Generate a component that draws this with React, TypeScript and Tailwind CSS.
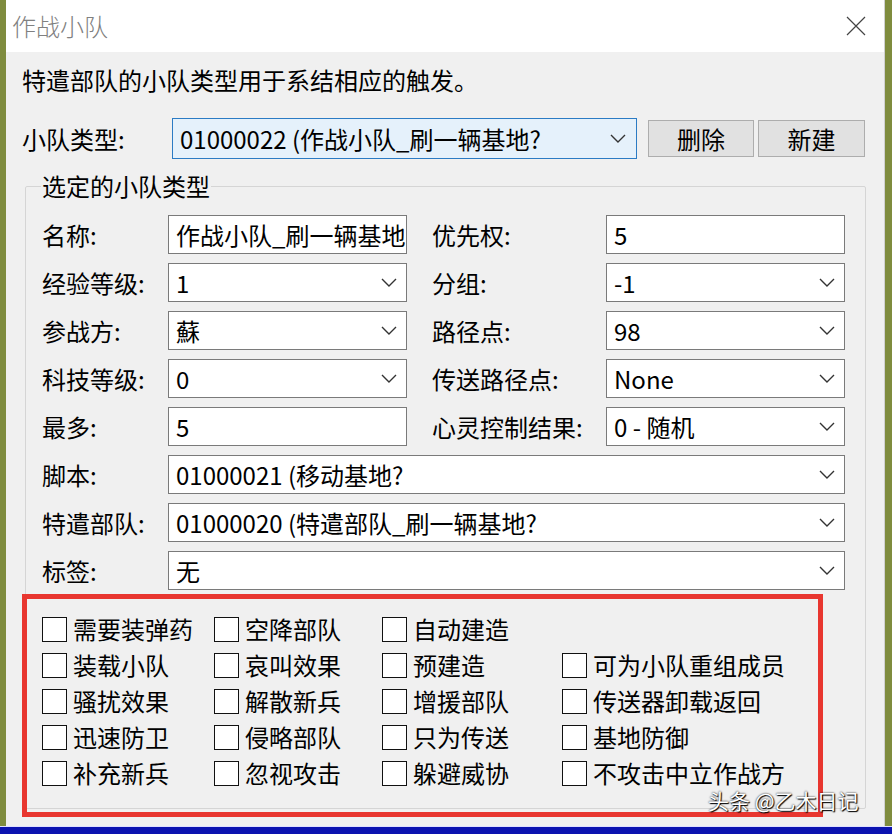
import React from "react";

function Chevron() {
  return (
    <svg width="16" height="9" viewBox="0 0 16 9" className="shrink-0">
      <path d="M1 1l7 7 7-7" stroke="#333" fill="none" strokeWidth="1.4" />
    </svg>
  );
}

function Field({ w, text, combo }: { w: string; text: string; combo?: boolean }) {
  return (
    <div
      className={`${w} h-[39px] bg-white border border-[#7a7a7a] flex items-center pl-[7px] ${
        combo ? "pr-[9px] justify-between" : "pr-0"
      }`}
    >
      <span className="whitespace-nowrap leading-[32px]">{text}</span>
      {combo && <Chevron />}
    </div>
  );
}

function Row({
  l1,
  v1,
  c1,
  l2,
  v2,
  c2,
}: {
  l1: string;
  v1: string;
  c1?: boolean;
  l2: string;
  v2: string;
  c2?: boolean;
}) {
  return (
    <div className="flex items-center h-[39px]">
      <div className="w-[126px] whitespace-nowrap">{l1}</div>
      <Field w="w-[239px]" text={v1} combo={c1} />
      <div className="w-[25px]" />
      <div className="w-[174px] whitespace-nowrap">{l2}</div>
      <Field w="w-[239px]" text={v2} combo={c2} />
    </div>
  );
}

function FullRow({ l, v }: { l: string; v: string }) {
  return (
    <div className="flex items-center h-[39px]">
      <div className="w-[126px] whitespace-nowrap">{l}</div>
      <Field w="w-[677px]" text={v} combo />
    </div>
  );
}

function Check({ label, w }: { label: string; w: string }) {
  return (
    <div className={`${w} flex items-center gap-[6px]`}>
      <div className="w-[25px] h-[25px] border-[1.5px] border-[#111] bg-white shrink-0" />
      <span className="whitespace-nowrap leading-[30px]">{label}</span>
    </div>
  );
}

const checkRows: (string | null)[][] = [
  ["需要装弹药", "空降部队", "自动建造", null],
  ["装载小队", "哀叫效果", "预建造", "可为小队重组成员"],
  ["骚扰效果", "解散新兵", "增援部队", "传送器卸载返回"],
  ["迅速防卫", "侵略部队", "只为传送", "基地防御"],
  ["补充新兵", "忽视攻击", "躲避威协", "不攻击中立作战方"],
];
const colW = ["w-[172px]", "w-[168px]", "w-[180px]", "w-[240px]"];

export default function App() {
  return (
    <div className="relative w-[892px] h-[834px] bg-[#7f8c3e] overflow-hidden font-['Noto_Sans_CJK_SC','Noto_Sans',sans-serif] text-[24px] text-black leading-[30px]">
      <div className="ml-[6px] w-[879px] h-[826px] flex flex-col bg-[#f0f0f0] border-r border-[#d0d0d0]">
        {/* title bar */}
        <div className="h-[52px] bg-white flex items-center justify-between pl-[6px] pr-[18px] shrink-0">
          <span className="text-[#808080] font-light">作战小队</span>
          <svg width="20" height="20" viewBox="0 0 20 20">
            <path d="M1 1l18 18M19 1L1 19" stroke="#444" strokeWidth="1.2" />
          </svg>
        </div>
        {/* body */}
        <div className="flex flex-col">
          <div className="pt-[13px] pl-[16px] leading-[30px] h-[43px]">特遣部队的小队类型用于系结相应的触发。</div>
          <div className="mt-[23px] flex items-center h-[41px] pl-[16px]">
            <div className="w-[150px] whitespace-nowrap">小队类型:</div>
            <div className="w-[465px] h-[41px] bg-[#e5f1fb] border border-[#2b7bc4] flex items-center justify-between pl-[7px] pr-[10px]">
              <span className="whitespace-nowrap leading-[32px]">01000022 (作战小队_刷一辆基地?</span>
              <Chevron />
            </div>
            <div className="w-[11px]" />
            <div className="w-[106px] h-[37px] bg-[#e1e1e1] border border-[#adadad] flex items-center justify-center">删除</div>
            <div className="w-[4px]" />
            <div className="w-[107px] h-[37px] bg-[#e1e1e1] border border-[#adadad] flex items-center justify-center">新建</div>
          </div>
          <fieldset className="mt-[12px] ml-[19px] w-[841px] h-[638px] border border-[#d5d5d5] rounded-[2px] pl-[16px]">
            <legend className="ml-[-1px] px-[1px] leading-[30px]">选定的小队类型</legend>
            <div className="pt-[14px] flex flex-col gap-[9px]">
              <Row l1="名称:" v1="作战小队_刷一辆基地" l2="优先权:" v2="5" />
              <Row l1="经验等级:" v1="1" c1 l2="分组:" v2="-1" c2 />
              <Row l1="参战方:" v1="蘇" c1 l2="路径点:" v2="98" c2 />
              <Row l1="科技等级:" v1="0" c1 l2="传送路径点:" v2="None" c2 />
              <Row l1="最多:" v1="5" l2="心灵控制结果:" v2="0 - 随机" c2 />
              <FullRow l="脚本:" v="01000021 (移动基地?" />
              <FullRow l="特遣部队:" v="01000020 (特遣部队_刷一辆基地?" />
              <FullRow l="标签:" v="无" />
            </div>
            <div className="mt-[21px] flex flex-col">
              {checkRows.map((r, i) => (
                <div key={i} className="flex items-center h-[36px]">
                  {r.map((c, j) =>
                    c ? <Check key={j} label={c} w={colW[j]} /> : <div key={j} className={colW[j]} />
                  )}
                </div>
              ))}
            </div>
          </fieldset>
        </div>
      </div>
      <div className="h-[8px] bg-[#0b12b0] border-t border-[#e0e0ff]" />
      {/* red annotation */}
      <div className="absolute left-[22px] top-[594px] w-[801px] h-[223px] border-[5px] border-[#e8362f] pointer-events-none" />
      {/* watermark */}
      <div className="absolute left-[708px] top-[790px] text-[21px] text-white leading-none [text-shadow:0_0_2px_#000,1px_1px_1px_#000]">
        头条 @乙木日记
      </div>
    </div>
  );
}
